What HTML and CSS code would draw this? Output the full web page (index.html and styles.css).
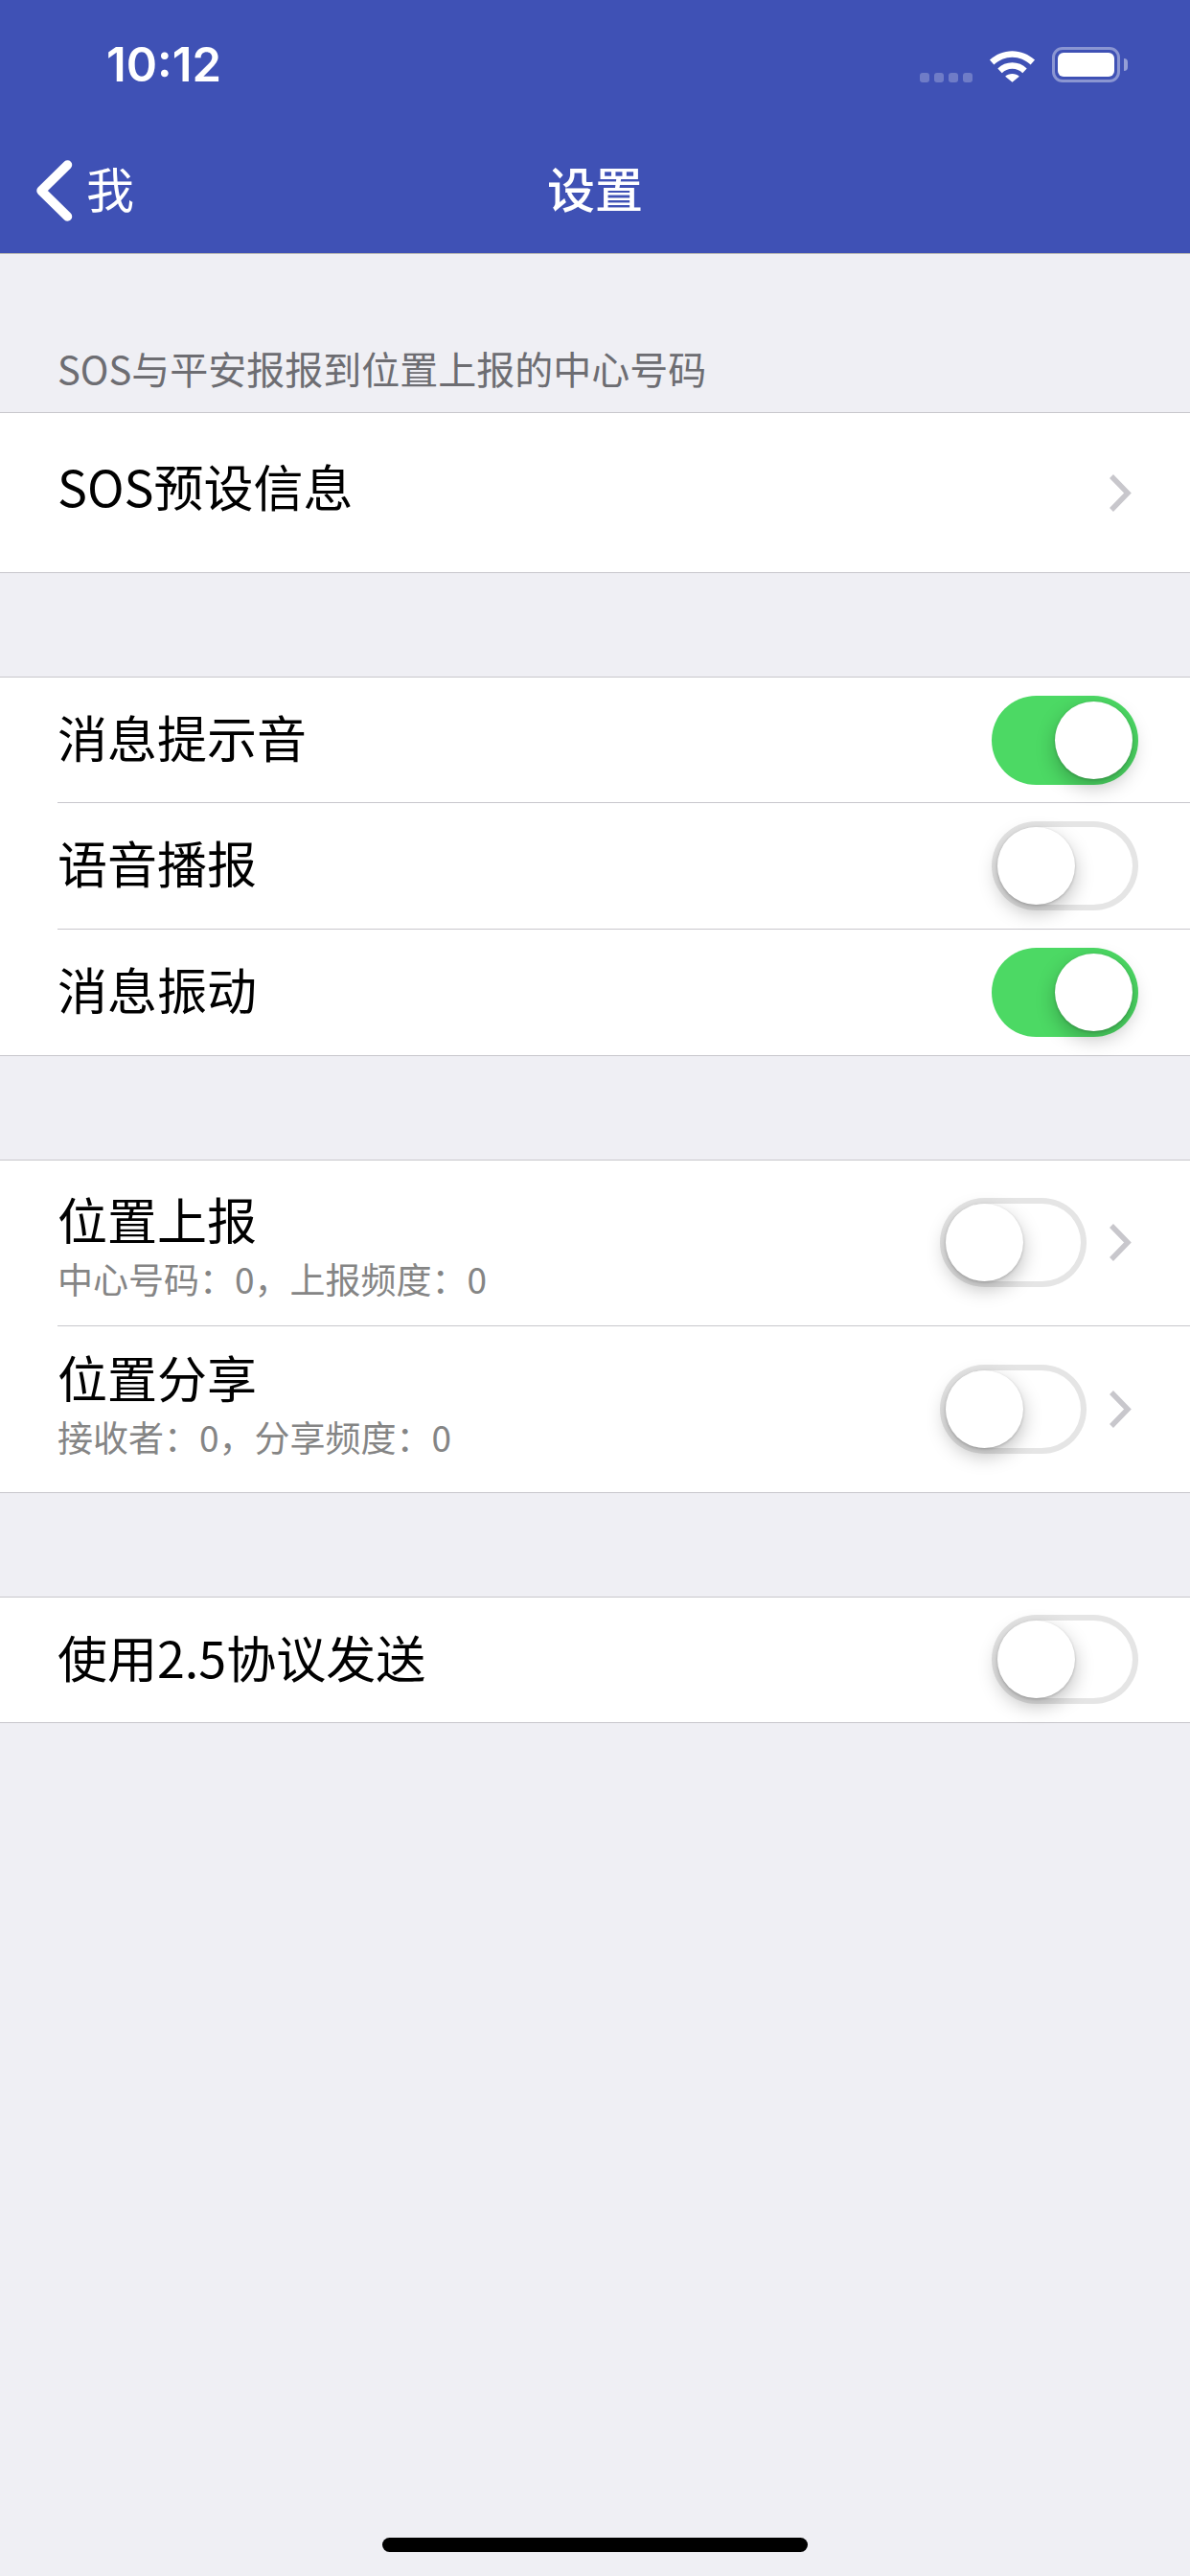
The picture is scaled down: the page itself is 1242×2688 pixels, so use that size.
FILE: index.html
```html
<!DOCTYPE html>
<html lang="zh-CN">
<head>
    <meta charset="UTF-8">
    <title>设置</title>
    <link rel="stylesheet" href="styles.css">
</head>
<body>
    <div class="page">
        <div class="header">
            <div class="statusBar">
                <span class="time">10:12</span>
                <div class="statusIcons">
                    <div class="signal"><i></i><i></i><i></i><i></i></div>
                    <svg class="wifi" width="49" height="36" viewBox="0 0 50 36">
                        <path d="M1 12.5C7.5 6.5 16 3 25 3s17.500 3.500 24 9.500l-4.500 5C39 12.500 32.500 9.500 25 9.500S11 12.500 5.500 17.500z" fill="#fff"/>
                        <path d="M9.500 21.500C13.800 17.500 19 15.300 25 15.300s11.200 2.200 15.500 6.200L36 26.300C33 23.500 29.300 21.800 25 21.800s-8 1.700-11 4.500z" fill="#fff"/>
                        <path d="M17.500 30C19.500 28.300 22 27.300 25 27.300s5.500 1 7.500 2.700L25 36z" fill="#fff"/>
                    </svg>
                    <div class="battery">
                        <div class="batteryBody"><div class="batteryFill"></div></div>
                        <div class="batteryTip"></div>
                    </div>
                </div>
            </div>
            <div class="navBar">
                <div class="backBtn">
                    <svg width="38" height="64" viewBox="0 0 38 64">
                        <path d="M32.500 5L5 32l27.500 27" fill="none" stroke="#fff" stroke-width="9.500" stroke-linecap="round" stroke-linejoin="round"/>
                    </svg>
                    <span>我</span>
                </div>
                <div class="navTitle">设置</div>
            </div>
        </div>

        <div class="sectionLabel">SOS与平安报报到位置上报的中心号码</div>
        <div class="group">
            <div class="row rowLink">
                <div class="rowText">SOS预设信息</div>
                <svg class="chevron" width="23" height="39" viewBox="0 0 23 39"><path d="M2 2l17 17.500L2 37" fill="none" stroke="#c8c7cc" stroke-width="5.500"/></svg>
            </div>
        </div>

        <div class="group groupGap">
            <div class="row rowSwitch">
                <div class="rowText">消息提示音</div>
                <div class="toggle on"><div class="knob"></div></div>
            </div>
            <div class="row rowSwitch">
                <div class="rowText">语音播报</div>
                <div class="toggle"><div class="knob"></div></div>
            </div>
            <div class="row rowSwitch">
                <div class="rowText">消息振动</div>
                <div class="toggle on"><div class="knob"></div></div>
            </div>
        </div>

        <div class="group groupGap">
            <div class="row rowDetail">
                <div class="rowText">
                    位置上报
                    <div class="subText">中心号码：0，上报频度：0</div>
                </div>
                <div class="toggle"><div class="knob"></div></div>
                <svg class="chevron" width="23" height="39" viewBox="0 0 23 39"><path d="M2 2l17 17.500L2 37" fill="none" stroke="#c8c7cc" stroke-width="5.500"/></svg>
            </div>
            <div class="row rowDetail">
                <div class="rowText">
                    位置分享
                    <div class="subText">接收者：0，分享频度：0</div>
                </div>
                <div class="toggle"><div class="knob"></div></div>
                <svg class="chevron" width="23" height="39" viewBox="0 0 23 39"><path d="M2 2l17 17.500L2 37" fill="none" stroke="#c8c7cc" stroke-width="5.500"/></svg>
            </div>
        </div>

        <div class="group groupGap">
            <div class="row rowSingle">
                <div class="rowText">使用2.5协议发送</div>
                <div class="toggle"><div class="knob"></div></div>
            </div>
        </div>

        <div class="homeBar"></div>
    </div>
</body>
</html>
```

FILE: styles.css
```css
body {
    margin: 0;
    font-family: "Noto Sans CJK SC", "Noto Sans", sans-serif;
    background-color: #efeff4;
    color: #000;
}

.page {
    position: relative;
    width: 1242px;
    height: 2688px;
    overflow: hidden;
}

.header {
    height: 264px;
    background-color: #3f51b5;
    border-bottom: 1px solid #b2b2b2;
    color: #fff;
}

.statusBar {
    height: 132px;
    box-sizing: border-box;
    display: flex;
    justify-content: space-between;
    align-items: center;
    padding: 3px 65px 0 111px;
}

.time {
    font-family: Inter, sans-serif;
    font-size: 49px;
    font-weight: 600;
}

.statusIcons {
    display: flex;
    align-items: center;
}

.signal {
    display: flex;
    gap: 5px;
    margin: 26px 17px 0 0;
}

.signal i {
    width: 10px;
    height: 10px;
    border-radius: 3px;
    background-color: rgba(255, 255, 255, 0.25);
}

.wifi {
    margin-right: 17px;
}

.battery {
    display: flex;
    align-items: center;
}

.batteryBody {
    width: 59px;
    height: 25px;
    padding: 3px;
    border: 3px solid rgba(255, 255, 255, 0.4);
    border-radius: 11px;
}

.batteryFill {
    height: 100%;
    background-color: #fff;
    border-radius: 6px;
}

.batteryTip {
    width: 4px;
    height: 13px;
    margin-left: 4px;
    border-radius: 0 6px 6px 0;
    background-color: rgba(255, 255, 255, 0.45);
}

.navBar {
    position: relative;
    height: 132px;
    display: flex;
    justify-content: center;
    align-items: center;
}

.navTitle {
    font-size: 50px;
    font-weight: 500;
    padding-bottom: 7px;
}

/* back button sits over the centred title row */
.backBtn {
    position: absolute;
    left: 38px;
    top: 27px;
    display: flex;
    align-items: center;
    gap: 14px;
    font-size: 50px;
}

.backBtn span {
    padding-bottom: 7px;
}

.sectionLabel {
    height: 165px;
    box-sizing: border-box;
    padding: 91px 60px 0;
    font-size: 40px;
    line-height: 56px;
    color: #6d6d72;
}

.group {
    background-color: #fff;
    border-top: 1px solid #c8c7cc;
    border-bottom: 1px solid #c8c7cc;
}

.groupGap {
    margin-top: 108px;
}

.row {
    display: flex;
    align-items: center;
    margin-left: 60px;
    padding-right: 54px;
    border-bottom: 1px solid #c8c7cc;
    box-sizing: border-box;
}

.row:last-child {
    border-bottom: none;
}

.rowLink {
    height: 166px;
    padding-right: 61px;
}

.rowSwitch {
    height: 131.33px;
}

.rowSingle {
    height: 130px;
}

.rowDetail {
    height: 173px;
    padding-right: 61px;
}

.rowText {
    flex: 1;
    font-size: 52px;
    line-height: 68px;
    padding-bottom: 6px;
}

.rowLink .rowText {
    padding-bottom: 14px;
}

.rowDetail:first-child .rowText {
    padding: 7px 0 0;
}

.rowDetail:last-child .rowText {
    padding: 0 0 9px;
}

.subText {
    font-size: 37px;
    line-height: 57px;
    color: #858585;
}

.chevron {
    flex: none;
}

.rowDetail .chevron {
    margin-left: 24px;
}

.toggle {
    flex: none;
    display: flex;
    width: 153px;
    height: 93px;
    box-sizing: border-box;
    padding: 6px;
    border-radius: 47px;
    background-color: #fff;
    box-shadow: inset 0 0 0 6px #e5e5e5;
}

.toggle.on {
    justify-content: flex-end;
    background-color: #4cd964;
    box-shadow: none;
}

.knob {
    width: 81px;
    height: 81px;
    border-radius: 50%;
    background-color: #fff;
    box-shadow: 0 8px 20px rgba(0, 0, 0, 0.25), 0 1px 3px rgba(0, 0, 0, 0.2);
}

.homeBar {
    position: absolute;
    left: 399px;
    bottom: 25px;
    width: 444px;
    height: 15px;
    border-radius: 8px;
    background-color: #000;
}
```
